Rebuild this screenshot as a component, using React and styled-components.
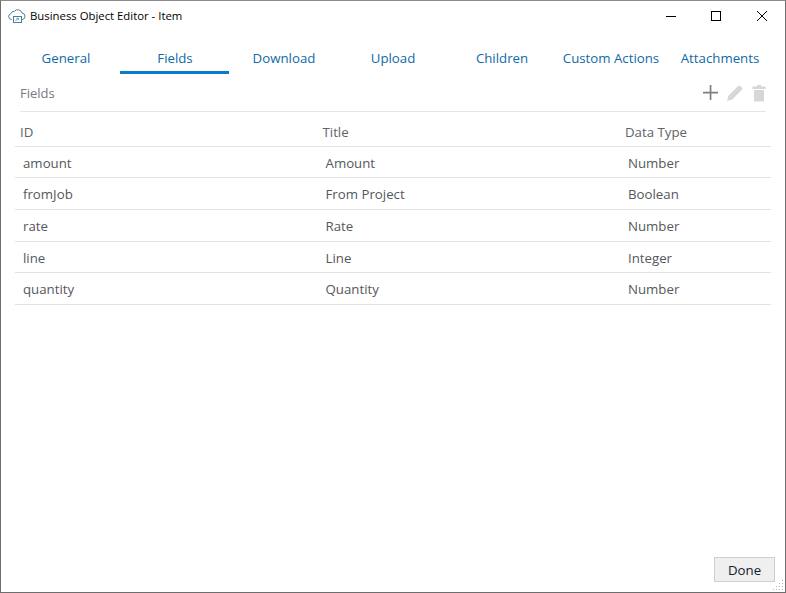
import React from 'react';
import styled, { createGlobalStyle } from 'styled-components';

const GlobalStyle = createGlobalStyle`
    html, body {
        margin: 0;
        padding: 0;
        background: #fff;
    }
`;

const Window = styled.div`
    width: 786px;
    height: 593px;
    box-sizing: border-box;
    border: 1px solid #6e6e6e;
    border-top-color: #8a8a8a;
    background: #fff;
    display: flex;
    flex-direction: column;
    position: relative;
    overflow: hidden;
    font-family: "Open Sans", "Noto Sans", sans-serif;
`;

const TitleBar = styled.div`
    height: 29px;
    display: flex;
    align-items: center;
    padding-left: 7px;
    flex: none;
`;

const TitleText = styled.span`
    font-size: 11.35px;
    color: #000;
    margin-left: 4px;
    flex: 1;
`;

const WinButton = styled.div`
    width: 46px;
    height: 29px;
    display: flex;
    align-items: center;
    justify-content: center;
`;

const Tabs = styled.div`
    display: flex;
    padding-left: 10px;
    height: 44px;
    flex: none;
`;

const Tab = styled.div`
    width: 109px;
    height: 44px;
    box-sizing: border-box;
    padding: 19px 0 0 1px;
    text-align: center;
    font-size: 13.25px;
    line-height: 19px;
    white-space: nowrap;
    color: #0f6aa8;
    border-bottom: 3px solid ${p => (p.$active ? '#0a7cc8' : 'transparent')};
`;

const SectionHeader = styled.div`
    margin: 0 19px;
    height: 38px;
    box-sizing: border-box;
    border-bottom: 1px solid #e6e6e6;
    display: flex;
    align-items: center;
    justify-content: space-between;
    flex: none;
`;

const SectionTitle = styled.span`
    font-size: 13px;
    color: #77797c;
`;

const Actions = styled.div`
    display: flex;
    align-items: center;
    gap: 8px;
`;

const Table = styled.div`
    margin: 0 14px;
    flex: none;
`;

const Row = styled.div`
    display: grid;
    grid-template-columns: 302.5px 302.5px 1fr;
    height: ${p => p.$height}px;
    box-sizing: border-box;
    border-bottom: 1px solid #e2e2e2;
    align-items: center;
`;

const HeadCell = styled.div`
    font-size: 13.25px;
    color: #5f6368;
    padding: 5px 0 0 5px;
`;

const Cell = styled.div`
    font-size: 13.25px;
    color: #55585c;
    padding: 1px 0 0 8px;
`;

const Footer = styled.div`
    margin-top: auto;
    display: flex;
    justify-content: flex-end;
    padding: 0 10px 10px 0;
`;

const DoneButton = styled.button`
    width: 61px;
    height: 25px;
    box-sizing: border-box;
    padding: 0;
    border: 1px solid #cfcfcf;
    background: #efefef;
    color: #15202b;
    font-family: inherit;
    font-size: 13.25px;
`;

const Grip = styled.svg`
    position: absolute;
    right: 1px;
    bottom: 1px;
`;

const CloudIcon = () => (
    <svg width="18" height="16" viewBox="0 0 18 16" fill="none" stroke="#4d7f9c" strokeWidth="1">
        <path d="M4 11.5H3.5a3 3 0 0 1-.6-5.900A3.200 3.200 0 0 1 6.400 3.400 4.300 4.300 0 0 1 14 5a3.300 3.300 0 0 1 .5 6.500H14" />
        <rect x="5.5" y="8.5" width="8" height="6" />
        <path d="M7.500 13l2.600-2.600M8.400 10.200h1.900v1.900" strokeWidth="0.8" />
    </svg>
);

const PlusIcon = () => (
    <svg width="15" height="15" viewBox="0 0 15 15">
        <path d="M6.700 0h1.700v6.700H15v1.700H8.400V15H6.700V8.400H0V6.700h6.700z" fill="#7b7e85" />
    </svg>
);

const PencilIcon = () => (
    <svg width="18" height="18" viewBox="0 0 18 18">
        <path d="M1 17l1.200-5L12.500 1.800a1 1 0 0 1 1.400 0l2.300 2.300a1 1 0 0 1 0 1.400L6 15.800z" fill="#d5d7d9" />
    </svg>
);

const TrashIcon = () => (
    <svg width="14" height="18" viewBox="0 0 14 18">
        <path d="M5 1h4v1.500h4.500V5H.5V2.500H5zM2 6h10v10.500a1 1 0 0 1-1 1H3a1 1 0 0 1-1-1z" fill="#d5d7d9" />
    </svg>
);

const tabs = ['General', 'Fields', 'Download', 'Upload', 'Children', 'Custom Actions', 'Attachments'];

const fields = [
    { id: 'amount', title: 'Amount', type: 'Number', height: 31 },
    { id: 'fromJob', title: 'From Project', type: 'Boolean', height: 32 },
    { id: 'rate', title: 'Rate', type: 'Number', height: 32 },
    { id: 'line', title: 'Line', type: 'Integer', height: 31 },
    { id: 'quantity', title: 'Quantity', type: 'Number', height: 32 },
];

const gripDots = [[10, 2], [7, 5], [10, 5], [4, 8], [7, 8], [10, 8], [1, 11], [4, 11], [7, 11], [10, 11]];

export default function App() {
    return (
        <Window>
            <GlobalStyle />
            <TitleBar>
                <CloudIcon />
                <TitleText>Business Object Editor - Item</TitleText>
                <WinButton>
                    <svg width="12" height="10"><path d="M2 5.500h10" stroke="#000" /></svg>
                </WinButton>
                <WinButton>
                    <svg width="10" height="10"><rect x="0.5" y="0.5" width="9" height="9" fill="none" stroke="#000" /></svg>
                </WinButton>
                <WinButton>
                    <svg width="10" height="10"><path d="M0 0l10 10M10 0L0 10" stroke="#000" /></svg>
                </WinButton>
            </TitleBar>
            <Tabs>
                {tabs.map(tab => (
                    <Tab key={tab} $active={tab === 'Fields'}>{tab}</Tab>
                ))}
            </Tabs>
            <SectionHeader>
                <SectionTitle>Fields</SectionTitle>
                <Actions>
                    <PlusIcon />
                    <PencilIcon />
                    <TrashIcon />
                </Actions>
            </SectionHeader>
            <Table>
                <Row $height={35}>
                    <HeadCell>ID</HeadCell>
                    <HeadCell>Title</HeadCell>
                    <HeadCell>Data Type</HeadCell>
                </Row>
                {fields.map(field => (
                    <Row key={field.id} $height={field.height}>
                        <Cell>{field.id}</Cell>
                        <Cell>{field.title}</Cell>
                        <Cell>{field.type}</Cell>
                    </Row>
                ))}
            </Table>
            <Footer>
                <DoneButton>Done</DoneButton>
            </Footer>
            <Grip width="12" height="13" viewBox="0 0 12 13">
                {gripDots.map(([x, y]) => (
                    <rect key={`${x}-${y}`} x={x} y={y} width="1" height="1" fill="#b5b5b5" />
                ))}
            </Grip>
        </Window>
    );
}
